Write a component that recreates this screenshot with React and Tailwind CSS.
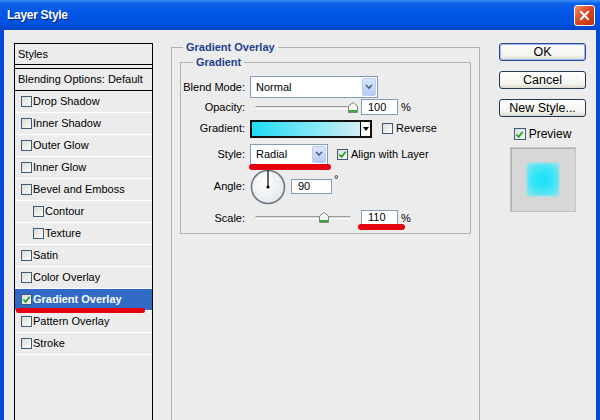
import React from 'react';

const Check = () => (
  <svg viewBox="0 0 10 10" className="w-[9px] h-[9px]">
    <path d="M1.5 5 L4 7.6 L8.6 2" fill="none" stroke="#21a121" strokeWidth="2" />
  </svg>
);

const Box = ({ checked, size = 'w-[11px] h-[11px]' }) => (
  <span className={`${size} shrink-0 border border-[#3d5b7a] bg-[linear-gradient(135deg,#dcdcd6,#fbfbf9)] flex items-center justify-center`}>
    {checked && <Check />}
  </span>
);

const styleItems = [
  { label: 'Drop Shadow' },
  { label: 'Inner Shadow' },
  { label: 'Outer Glow' },
  { label: 'Inner Glow' },
  { label: 'Bevel and Emboss' },
  { label: 'Contour', sub: true },
  { label: 'Texture', sub: true },
  { label: 'Satin' },
  { label: 'Color Overlay' },
  { label: 'Gradient Overlay', active: true },
  { label: 'Pattern Overlay' },
  { label: 'Stroke' },
];

const Arrow = () => (
  <span className="w-[14px] h-full shrink-0 rounded-[2px] border border-[#b9cdf6] bg-[linear-gradient(180deg,#dbe5fc,#b7cbf5)] flex items-center justify-center">
    <svg viewBox="0 0 8 6" className="w-[8px] h-[6px]">
      <path d="M1 1 L4 4 L7 1" fill="none" stroke="#4d6185" strokeWidth="1.6" />
    </svg>
  </span>
);

const Select = ({ value, className, children }) => (
  <div className={`relative ${className} border border-[#7f9db9] bg-white flex items-center justify-between pl-[3px] p-[1px]`}>
    <span className="pl-[2px]">{value}</span>
    <Arrow />
    {children}
  </div>
);

const Field = ({ value, className }) => (
  <div className={`${className} border border-[#7f9db9] bg-white pl-[6px] flex items-center leading-none`}>{value}</div>
);

const Thumb = ({ className }) => (
  <svg viewBox="0 0 10 11" className={`absolute top-0 w-[10px] h-[11px] ${className}`}>
    <path d="M0.5 4 L5 0.5 L9.5 4 V10.5 H0.5 Z" fill="#f4f4f0" stroke="#7a8a7a" />
    <rect x="1" y="8" width="8" height="2" fill="#3aa840" />
  </svg>
);

const Slider = ({ thumb }) => (
  <div className="relative w-[104px] h-[11px] ml-[5px]">
    <div className="absolute left-0 top-[4px] w-[96px] h-[3px] rounded-full border-t border-[#9c9c9c] border-b border-b-white bg-[#dcdcdc]" />
    <Thumb className={thumb} />
  </div>
);

const Row = ({ label, className, children }) => (
  <div className={`flex items-center ${className}`}>
    <span className="w-[64px] shrink-0 text-right">{label}</span>
    <div className="ml-[5px] flex items-center">{children}</div>
  </div>
);

const Btn = ({ primary, children }) => (
  <button
    className={`w-[87px] h-[18px] rounded-[3px] border ${primary ? 'border-[#2c4f94] shadow-[inset_0_0_0_1px_#9ab6ee]' : 'border-[#1f3a58]'} bg-[linear-gradient(180deg,#ffffff,#f3f3ee_75%,#dcd8cc)] text-[12.5px] leading-none flex items-center justify-center text-black`}
  >
    {children}
  </button>
);

export default function App() {
  return (
    <div className="w-[600px] h-[420px] overflow-hidden flex flex-col bg-[#ececec] font-['Liberation_Sans',Arial,sans-serif] text-black">
      {/* title bar */}
      <div className="h-[30px] shrink-0 flex items-center justify-between pl-[7px] pr-[5px] bg-[linear-gradient(180deg,#3d8ff6_0%,#0c60e8_12%,#0056e6_45%,#0052df_80%,#0044c4_100%)]">
        <span className="text-white font-bold text-[12px] tracking-[-0.3px] [text-shadow:1px_1px_0_#0b2575]">Layer Style</span>
        <span className="w-[21px] h-[21px] rounded-[3px] border border-white bg-[linear-gradient(135deg,#ec8a6a,#d8471f_50%,#bd2f0e)] flex items-center justify-center">
          <svg viewBox="0 0 12 12" className="w-[11px] h-[11px]">
            <path d="M2 2 L10 10 M10 2 L2 10" stroke="#fff" strokeWidth="2.2" strokeLinecap="round" />
          </svg>
        </span>
      </div>

      {/* body */}
      <div className="flex flex-1 min-h-0 overflow-hidden border-x-4 border-[#0a49d8] text-[11px]">
        {/* styles list */}
        <div className="ml-[10px] mt-[13px] w-[139px] h-[420px] shrink-0 border border-black">
          <div className="h-[21px] border-b border-black flex items-center pl-[3px]">Styles</div>
          <div className="h-[3px]" />
          <div className="h-[23px] border-y border-black flex items-center pl-[3px]">Blending Options: Default</div>
          {styleItems.map((s) => (
            <div
              key={s.label}
              className={`relative h-[22px] flex items-center gap-[1px] border-b border-white ${s.sub ? 'pl-[18px]' : 'pl-[6px]'} ${s.active ? 'bg-[#316ac5] text-white font-bold' : ''}`}
            >
              <Box checked={s.active} />
              <span>{s.label}</span>
              {s.active && <span className="absolute left-[1px] top-[19px] w-[129px] h-[5px] rounded-full bg-[#e4000f] z-10" />}
            </div>
          ))}
        </div>

        {/* settings */}
        <fieldset className="ml-[18px] mt-[11px] w-[309px] h-[420px] shrink-0 border border-[#b2b2ac] px-[8px]">
          <legend className="ml-[3px] px-[3px] leading-[13px] font-bold text-[#1d3f8f]">Gradient Overlay</legend>
          <fieldset className="mt-[2px] border border-[#b2b2ac] pb-[7px]">
            <legend className="ml-[12px] px-[3px] leading-[13px] font-bold text-[#1d3f8f]">Gradient</legend>

            <Row label="Blend Mode:" className="mt-[7px]">
              <Select value="Normal" className="w-[128px] h-[22px]" />
            </Row>

            <Row label="Opacity:" className="mt-[1px]">
              <Slider thumb="left-[93px]" />
              <Field value="100" className="ml-[2px] w-[37px] h-[16px]" />
              <span className="ml-[3px]">%</span>
            </Row>

            <Row label="Gradient:" className="mt-[4px]">
              <div className="w-[122px] h-[18px] border-2 border-[#111] flex">
                <div className="flex-1 bg-[linear-gradient(90deg,#1fdcf4,#7fe6f6_55%,#d3eef4)]" />
                <div className="w-[10px] border-l border-black bg-white flex items-center justify-center">
                  <svg viewBox="0 0 6 4" className="w-[6px] h-[4px]">
                    <path d="M0 0 H6 L3 4 Z" fill="#000" />
                  </svg>
                </div>
              </div>
              <span className="ml-[10px]"><Box /></span>
              <span className="ml-[3px]">Reverse</span>
            </Row>

            <Row label="Style:" className="mt-[6px]">
              <Select value="Radial" className="w-[78px] h-[21px]">
                <span className="absolute left-[-2px] top-[19px] w-[82px] h-[6px] rounded-full bg-[#e4000f]" />
              </Select>
              <span className="ml-[9px]"><Box checked /></span>
              <span className="ml-[3px]">Align with Layer</span>
            </Row>

            <Row label="Angle:" className="mt-[4px]">
              <svg viewBox="0 0 36 36" className="w-[36px] h-[36px]">
                <defs>
                  <radialGradient id="dial" cx="0.4" cy="0.35" r="0.7">
                    <stop offset="0" stopColor="#ffffff" />
                    <stop offset="1" stopColor="#e4e6ea" />
                  </radialGradient>
                </defs>
                <circle cx="18" cy="18" r="16.5" fill="url(#dial)" stroke="#6c7684" strokeWidth="1.6" />
                <path d="M18 1 V18" stroke="#000" strokeWidth="1.2" />
                <circle cx="18" cy="18" r="1.6" fill="#000" />
              </svg>
              <Field value="90" className="ml-[5px] w-[41px] h-[15px]" />
              <span className="ml-[2px] self-start mt-[2px]">°</span>
            </Row>

            <Row label="Scale:" className="mt-[5px]">
              <Slider thumb="left-[64px]" />
              <div className="relative ml-[2px]">
                <Field value="110" className="w-[37px] h-[15px]" />
                <span className="absolute left-[-3px] top-[14px] w-[47px] h-[6px] rounded-full bg-[#e4000f]" />
              </div>
              <span className="ml-[3px]">%</span>
            </Row>
          </fieldset>
        </fieldset>

        {/* buttons & preview */}
        <div className="ml-[19px] mt-[13px] w-[87px] shrink-0 flex flex-col items-center">
          <Btn primary>OK</Btn>
          <div className="h-[10px]" />
          <Btn>Cancel</Btn>
          <div className="h-[10px]" />
          <Btn>New Style...</Btn>
          <div className="mt-[8px] flex items-center gap-[3px] text-[12px]">
            <Box checked size="w-[12px] h-[12px]" />
            <span>Preview</span>
          </div>
          <div className="mt-[4px] w-[66px] h-[65px] bg-[#d7d7d7] border border-[#c4c4c4] shadow-[inset_1px_1px_0_#b0b0b0] flex items-center justify-center">
            <div className="w-[32px] h-[33px] bg-[radial-gradient(circle,#14e2f8_0%,#3fe4f7_50%,#8ee8f3_100%)] blur-[1px]" />
          </div>
        </div>
      </div>
    </div>
  );
}
